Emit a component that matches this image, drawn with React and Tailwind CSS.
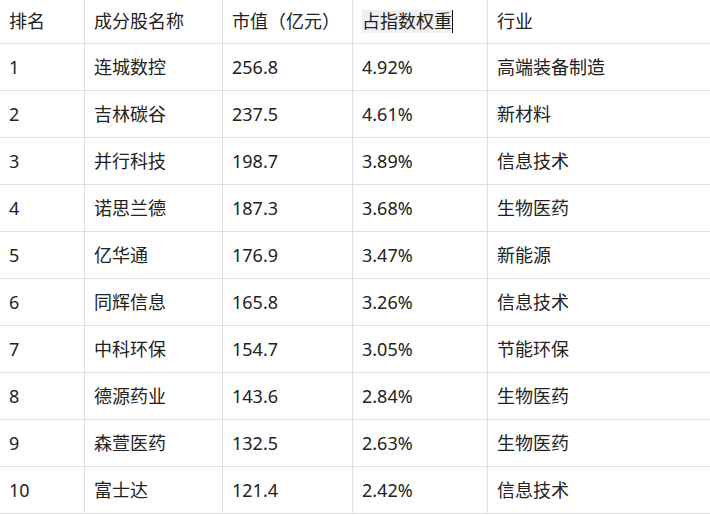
import React from "react";

const rows = [
  ["1", "连城数控", "256.8", "4.92%", "高端装备制造"],
  ["2", "吉林碳谷", "237.5", "4.61%", "新材料"],
  ["3", "并行科技", "198.7", "3.89%", "信息技术"],
  ["4", "诺思兰德", "187.3", "3.68%", "生物医药"],
  ["5", "亿华通", "176.9", "3.47%", "新能源"],
  ["6", "同辉信息", "165.8", "3.26%", "信息技术"],
  ["7", "中科环保", "154.7", "3.05%", "节能环保"],
  ["8", "德源药业", "143.6", "2.84%", "生物医药"],
  ["9", "森萱医药", "132.5", "2.63%", "生物医药"],
  ["10", "富士达", "121.4", "2.42%", "信息技术"],
];

const widths = ["w-[85px]", "w-[138px]", "w-[130px]", "w-[135px]", "flex-1"];

function Cell({ i, children }) {
  return (
    <div
      className={`${widths[i]} h-full flex items-center px-[9px] ${
        i < 4 ? "border-r border-[#dfe0e4]" : ""
      }`}
    >
      {children}
    </div>
  );
}

export default function App() {
  return (
    <div
      className="w-[710px] h-[515px] bg-white text-[18px] text-[#222222]"
      style={{ fontFamily: '"Noto Sans", "Noto Sans CJK SC", sans-serif' }}
    >
      <div className="flex h-[44px] border-b border-[#dfe0e4]">
        <Cell i={0}>排名</Cell>
        <Cell i={1}>成分股名称</Cell>
        <Cell i={2}>市值（亿元）</Cell>
        <Cell i={3}>
          <span className="inline-block bg-[#eef0f2] leading-[23px] border-r-[1.5px] border-[#111]">
            占指数权重
          </span>
        </Cell>
        <Cell i={4}>行业</Cell>
      </div>
      {rows.map((r) => (
        <div key={r[0]} className="flex h-[47px] border-b border-[#dfe0e4]">
          {r.map((c, i) => (
            <Cell key={i} i={i}>
              {c}
            </Cell>
          ))}
        </div>
      ))}
    </div>
  );
}
